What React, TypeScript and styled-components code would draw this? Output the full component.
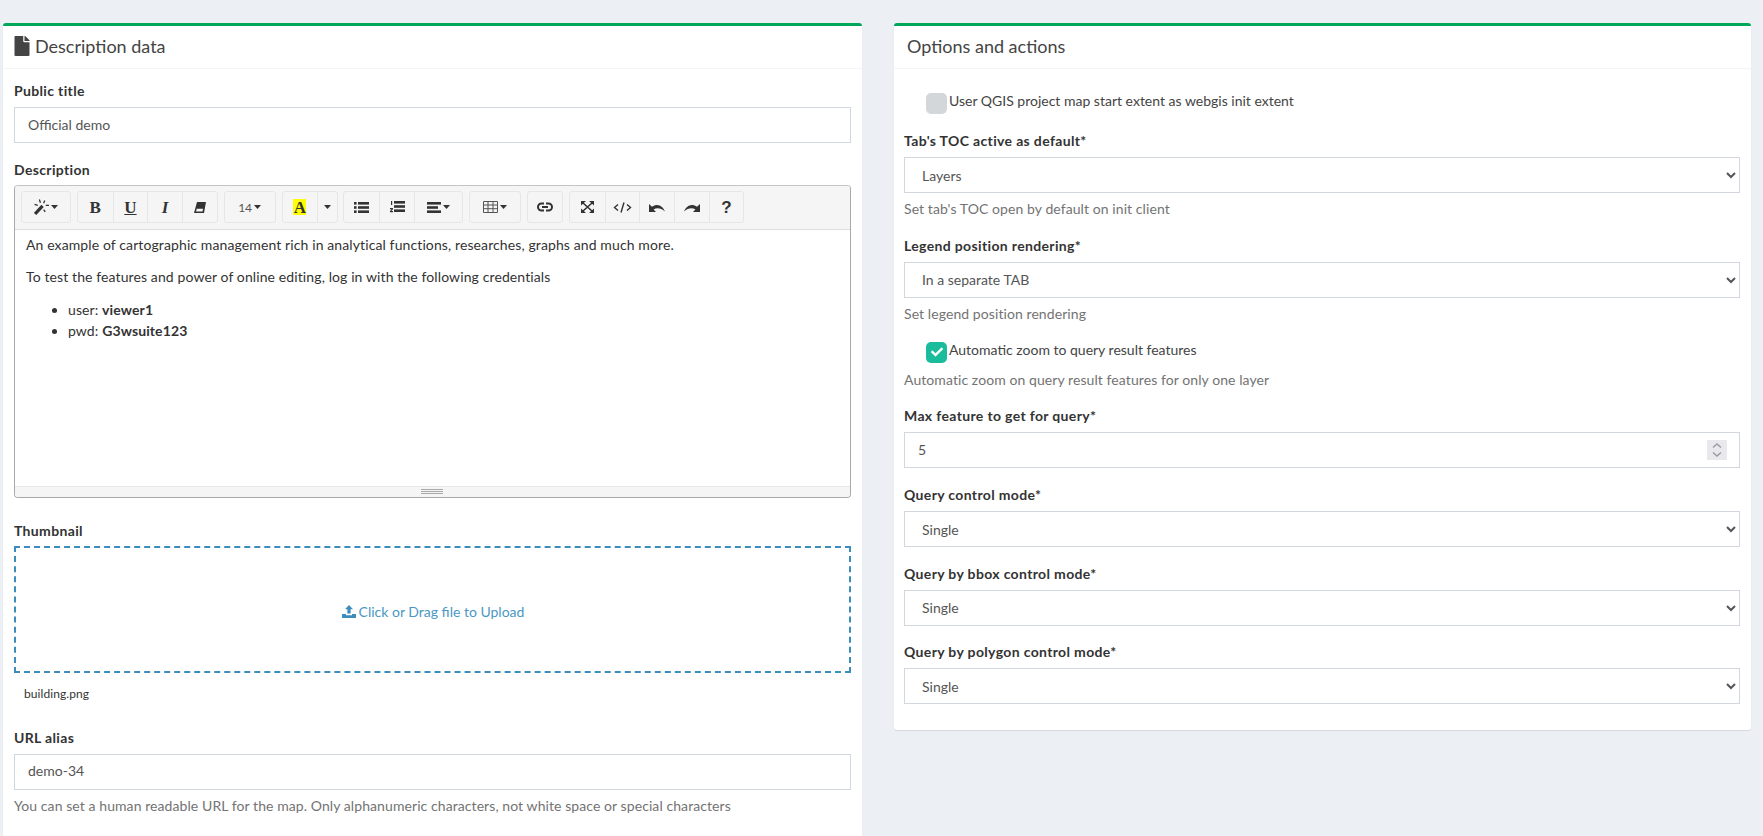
import React from "react";
import styled, { createGlobalStyle } from "styled-components";
import { FaFile, FaCheck } from "react-icons/fa";

const FONT = `Lato, "Liberation Sans", sans-serif`;

const Global = createGlobalStyle`
  html, body { margin: 0; padding: 0; height: 836px; overflow: hidden; background: #ecf0f5; }
  body { font-family: ${FONT}; font-size: 14px; color: #333; letter-spacing: 0.08px; }
  * { box-sizing: border-box; }
`;

const Page = styled.div`
  display: grid;
  grid-template-columns: 859px 857px;
  column-gap: 32px;
  align-items: start;
  padding: 23px 0 0 3px;
`;
const Card = styled.section`
  background: #fff;
  border-top: 3px solid #00a65a;
  border-radius: 3px;
  box-shadow: 0 1px 1px rgba(0, 0, 0, 0.1);
`;
const CardHeader = styled.header<{ $left: number }>`
  display: flex;
  align-items: center;
  height: 43px;
  padding: 0 10px 3px ${(p) => p.$left}px;
  border-bottom: 1px solid #f4f4f4;
  color: #444;
  font-size: 18px;
  line-height: 20px;
  letter-spacing: 0;
  gap: 3px;
`;
const CardBody = styled.div<{ $pad: string }>`
  padding: ${(p) => p.$pad};
  display: flex;
  flex-direction: column;
`;
const Group = styled.div<{ $mb?: number }>`
  margin-bottom: ${(p) => (p.$mb === undefined ? 16.7 : p.$mb)}px;
`;
const Label = styled.label<{ $mb?: number }>`
  display: block;
  font-weight: 700;
  line-height: 20px;
  letter-spacing: 0.35px;
  margin-bottom: ${(p) => (p.$mb === undefined ? 6 : p.$mb)}px;
`;
const Input = styled.input`
  display: block;
  width: 100%;
  height: 36px;
  padding: 5px 13px 7px;
  border: 1px solid #d2d6de;
  background: #fff;
  color: #555;
  font: 14px ${FONT};
  outline: none;
  &::-webkit-inner-spin-button { display: none; }
`;
const Select = styled.select`
  display: block;
  width: 100%;
  height: 36px;
  padding: 6px 13px;
  border: 1px solid #d2d6de;
  border-radius: 0;
  background: #fff;
  color: #555;
  font: 14px ${FONT};
  outline: none;
`;
const Help = styled.span`
  display: block;
  margin-top: 6px;
  color: #737373;
  line-height: 20px;
`;
const NumberWrap = styled.div`
  position: relative;
`;
const Spinner = styled.div`
  position: absolute;
  top: 8px;
  right: 13px;
  width: 20px;
  height: 20px;
  background: #e9e9ed;
  display: flex;
  align-items: center;
  justify-content: center;
`;
const Editor = styled.div`
  border: 1px solid #a9a9a9;
  border-top-color: #c4c4c4;
  border-radius: 4px;
  height: 313px;
  display: flex;
  flex-direction: column;
  overflow: hidden;
`;
const Toolbar = styled.div`
  display: flex;
  align-items: center;
  gap: 5.95px;
  height: 44px;
  padding: 0 6px;
  background: #f5f5f5;
  border-bottom: 1px solid #ddd;
`;
const BtnGroup = styled.div`
  display: flex;
  height: 32px;
  border: 1px solid #e6e6e6;
  border-radius: 3px;
  & > * + * { border-left: 1px solid #e6e6e6; }
`;
const ToolBtn = styled.div<{ $w?: number }>`
  display: flex;
  align-items: center;
  justify-content: center;
  width: ${(p) => p.$w || 34.7}px;
  gap: 2px;
  color: #333;
  font-size: 14px;
`;
const SerifGlyph = styled.span<{ $italic?: boolean; $under?: boolean }>`
  font: ${(p) => (p.$italic ? "italic " : "")}700 17px/1 "Liberation Serif", serif;
  text-decoration: ${(p) => (p.$under ? "underline" : "none")};
  letter-spacing: 0;
`;
const HighlightGlyph = styled.span`
  display: block;
  width: 13px;
  height: 16px;
  background: #ff0;
  text-align: center;
  font: 700 17px/17px "Liberation Serif", serif;
  letter-spacing: 0;
`;
const SizeText = styled.span`
  font-size: 12px;
  color: #555;
  letter-spacing: 0;
`;
const HelpGlyph = styled.span`
  font: 700 17px/1 "Liberation Sans", sans-serif;
  letter-spacing: 0;
`;
const EditArea = styled.div`
  flex: 1;
  padding: 4px 11px;
  color: #333;
  line-height: 21.4px;
  letter-spacing: 0.11px;
  & p { margin: 0 0 10.5px; }
  & ul { margin: 11.5px 0 0; padding-left: 42px; }
`;
const Resizer = styled.div`
  height: 11px;
  background: #f5f5f5;
  border-top: 1px solid #e8e8e8;
  display: flex;
  align-items: center;
  justify-content: center;
  padding-right: 2px;
`;
const Grip = styled.div`
  width: 22px;
  height: 5px;
  border-top: 1px solid #a9a9a9;
  border-bottom: 1px solid #a9a9a9;
  &::after { content: ""; display: block; margin-top: 1px; height: 1px; background: #a9a9a9; }
`;
const Drop = styled.div`
  height: 127px;
  padding: 4px 0 0 1px;
  border: 2px dashed #3c8dbc;
  display: flex;
  align-items: center;
  justify-content: center;
  gap: 3px;
  color: #4a97c4;
  letter-spacing: 0;
`;
const FileName = styled.div`
  margin: 11px 0 0 10px;
  font-size: 12px;
  line-height: 20px;
  color: #333;
`;
const CheckRow = styled.div<{ $mb?: number }>`
  display: flex;
  gap: 2px;
  height: 22px;
  padding-left: 22px;
  margin-bottom: ${(p) => p.$mb || 0}px;
  color: #444;
  letter-spacing: 0;
`;
const CheckText = styled.span`
  line-height: 16px;
`;
const CheckBox = styled.span<{ $on?: boolean }>`
  width: 21px;
  height: 21px;
  border-radius: 5px;
  background: ${(p) => (p.$on ? "#1abc9c" : "#d3d7da")};
  display: flex;
  align-items: center;
  justify-content: center;
  color: #fff;
  font-size: 12px;
`;

const I = { fill: "#333" };

const Caret = () => (
  <svg width="7" height="4" viewBox="0 0 7 4"><path d="M0 0h7L3.500 4z" {...I} /></svg>
);
const Wand = () => (
  <svg width="15" height="16" viewBox="0 0 14 15" fill="none" stroke="#333">
    <path d="M1 14 8 6.500" strokeWidth="3" />
    <path d="M5 .5 6 3.500M10 1.500 9 4M11 6h3M.5 5l3 1M9 10l1.500 2" strokeWidth="1.200" />
  </svg>
);
const Eraser = () => (
  <svg width="12" height="11" viewBox="0 0 12 11">
    <path fillRule="evenodd" d="M3 0h9l-2 11H0zM2.700 6.800 2.100 9.400h6.400l.5-2.600z" {...I} />
  </svg>
);
const Bars = ({ x, w }: { x: number; w: number[] }) => (
  <>
    {w.map((width, i) => (
      <rect key={i} x={x} y={i * 4.2} width={width} height="2.600" {...I} />
    ))}
  </>
);
const ListUl = () => (
  <svg width="15" height="11" viewBox="0 0 15 11">
    <Bars x={4} w={[11, 11, 11]} />
    {[0, 4.2, 8.4].map((y) => <rect key={y} x="0" y={y} width="2.600" height="2.600" {...I} />)}
  </svg>
);
const ListOl = () => (
  <svg width="15" height="12" viewBox="0 0 15 12">
    <Bars x={4} w={[11, 11, 11]} />
    <path d="M1 0h1.200v4H1zM0 7h3v1.200L1.400 10H3v1.200H0V10l1.600-1.800H0z" {...I} />
  </svg>
);
const Align = () => (
  <svg width="14" height="11" viewBox="0 0 14 11"><Bars x={0} w={[14, 11, 14]} /></svg>
);
const TableIcon = () => (
  <svg width="15" height="12" viewBox="0 0 15 12" fill="none" stroke="#555">
    <path d="M.500.500h14v11H.500zM.500 4h14M.500 7.700h14M5 .500v11M10 .500v11" />
  </svg>
);
const LinkIcon = () => (
  <svg width="16" height="10" viewBox="0 0 16 10" fill="none" stroke="#333" strokeWidth="2">
    <path d="M7 1.500H4.500a3.500 3.500 0 0 0 0 7H7M9 1.500h2.500a3.500 3.500 0 0 1 0 7H9M5 5h6" />
  </svg>
);
const Expand = () => (
  <svg width="13" height="12" viewBox="0 0 13 12">
    <path d="M0 0h5L0 4.500zM13 0H8l5 4.500zM0 12h5L0 7.500zM13 12H8l5-4.500z" {...I} />
    <path d="M2 2l9 8M11 2 2 10" stroke="#333" strokeWidth="1.600" />
  </svg>
);
const Code = () => (
  <svg width="19" height="11" viewBox="0 0 19 11" fill="none" stroke="#333" strokeWidth="1.400">
    <path d="M5 2.500 1.500 5.500 5 8.500M14 2.500l3.500 3L14 8.500M11 .5l-3 10" />
  </svg>
);
const UndoPath = "M0 2v8h7L4.600 7.400C8 5.400 12 6 16 9.600 14 4 8.500 .6 3 4.800z";
const Undo = () => (
  <svg width="16" height="11" viewBox="0 0 16 11"><path d={UndoPath} {...I} /></svg>
);
const Redo = () => (
  <svg width="16" height="11" viewBox="0 0 16 11"><path d={UndoPath} transform="matrix(-1 0 0 1 16 0)" {...I} /></svg>
);
const Upload = () => (
  <svg width="14" height="13" viewBox="0 0 14 13" fill="#3c8dbc">
    <path d="M7 0 11 4.200H8.600V8.500H5.400V4.200H3z" />
    <path d="M0 9h4v1.200h6V9h4v4H0z" />
  </svg>
);
const SpinArrows = () => (
  <svg width="12" height="16" viewBox="0 0 12 16" fill="none" stroke="#9b9ba6" strokeWidth="1.500">
    <path d="M2 5.500 6 2l4 3.500M2 10.500 6 14l4-3.500" />
  </svg>
);

const App = () => (
  <>
    <Global />
    <Page>
      <Card>
        <CardHeader $left={9}>
          <FaFile size={20} color="#444" />
          Description data
        </CardHeader>
        <CardBody $pad="12px 11px 20px">
          <Group>
            <Label>Public title</Label>
            <Input defaultValue="Official demo" />
          </Group>
          <Group $mb={23}>
            <Label $mb={5}>Description</Label>
            <Editor>
              <Toolbar>
                <BtnGroup>
                  <ToolBtn $w={48}><Wand /><Caret /></ToolBtn>
                </BtnGroup>
                <BtnGroup>
                  <ToolBtn><SerifGlyph>B</SerifGlyph></ToolBtn>
                  <ToolBtn><SerifGlyph $under>U</SerifGlyph></ToolBtn>
                  <ToolBtn><SerifGlyph $italic>I</SerifGlyph></ToolBtn>
                  <ToolBtn><Eraser /></ToolBtn>
                </BtnGroup>
                <BtnGroup>
                  <ToolBtn $w={50}><SizeText>14</SizeText><Caret /></ToolBtn>
                </BtnGroup>
                <BtnGroup>
                  <ToolBtn><HighlightGlyph>A</HighlightGlyph></ToolBtn>
                  <ToolBtn $w={19.3}><Caret /></ToolBtn>
                </BtnGroup>
                <BtnGroup>
                  <ToolBtn><ListUl /></ToolBtn>
                  <ToolBtn><ListOl /></ToolBtn>
                  <ToolBtn $w={48.6}><Align /><Caret /></ToolBtn>
                </BtnGroup>
                <BtnGroup>
                  <ToolBtn $w={50}><TableIcon /><Caret /></ToolBtn>
                </BtnGroup>
                <BtnGroup>
                  <ToolBtn $w={34}><LinkIcon /></ToolBtn>
                </BtnGroup>
                <BtnGroup>
                  <ToolBtn $w={34.6}><Expand /></ToolBtn>
                  <ToolBtn $w={34.6}><Code /></ToolBtn>
                  <ToolBtn $w={34.6}><Undo /></ToolBtn>
                  <ToolBtn $w={34.6}><Redo /></ToolBtn>
                  <ToolBtn $w={34.6}><HelpGlyph>?</HelpGlyph></ToolBtn>
                </BtnGroup>
              </Toolbar>
              <EditArea>
                <p>An example of cartographic management rich in analytical functions, researches, graphs and much more.</p>
                <p>To test the features and power of online editing, log in with the following credentials</p>
                <ul>
                  <li>user: <b>viewer1</b></li>
                  <li>pwd: <b>G3wsuite123</b></li>
                </ul>
              </EditArea>
              <Resizer><Grip /></Resizer>
            </Editor>
          </Group>
          <Group $mb={24}>
            <Label $mb={5}>Thumbnail</Label>
            <Drop><Upload />Click or Drag file to Upload</Drop>
            <FileName>building.png</FileName>
          </Group>
          <Group>
            <Label>URL alias</Label>
            <Input defaultValue="demo-34" />
            <Help>You can set a human readable URL for the map. Only alphanumeric characters, not white space or special characters</Help>
          </Group>
        </CardBody>
      </Card>
      <Card>
        <CardHeader $left={13}>Options and actions</CardHeader>
        <CardBody $pad="24px 11px 26px 10px">
          <CheckRow $mb={16}>
            <CheckBox />
            <CheckText>User QGIS project map start extent as webgis init extent</CheckText>
          </CheckRow>
          <Group>
            <Label>Tab's TOC active as default*</Label>
            <Select defaultValue="Layers"><option>Layers</option></Select>
            <Help>Set tab's TOC open by default on init client</Help>
          </Group>
          <Group $mb={18}>
            <Label>Legend position rendering*</Label>
            <Select defaultValue="In a separate TAB"><option>In a separate TAB</option></Select>
            <Help>Set legend position rendering</Help>
          </Group>
          <CheckRow>
            <CheckBox $on><FaCheck /></CheckBox>
            <CheckText>Automatic zoom to query result features</CheckText>
          </CheckRow>
          <Group>
            <Help>Automatic zoom on query result features for only one layer</Help>
          </Group>
          <Group>
            <Label>Max feature to get for query*</Label>
            <NumberWrap>
              <Input type="number" defaultValue="5" />
              <Spinner><SpinArrows /></Spinner>
            </NumberWrap>
          </Group>
          <Group>
            <Label>Query control mode*</Label>
            <Select defaultValue="Single"><option>Single</option></Select>
          </Group>
          <Group>
            <Label>Query by bbox control mode*</Label>
            <Select defaultValue="Single"><option>Single</option></Select>
          </Group>
          <Group $mb={0}>
            <Label>Query by polygon control mode*</Label>
            <Select defaultValue="Single"><option>Single</option></Select>
          </Group>
        </CardBody>
      </Card>
    </Page>
  </>
);

export default App;
